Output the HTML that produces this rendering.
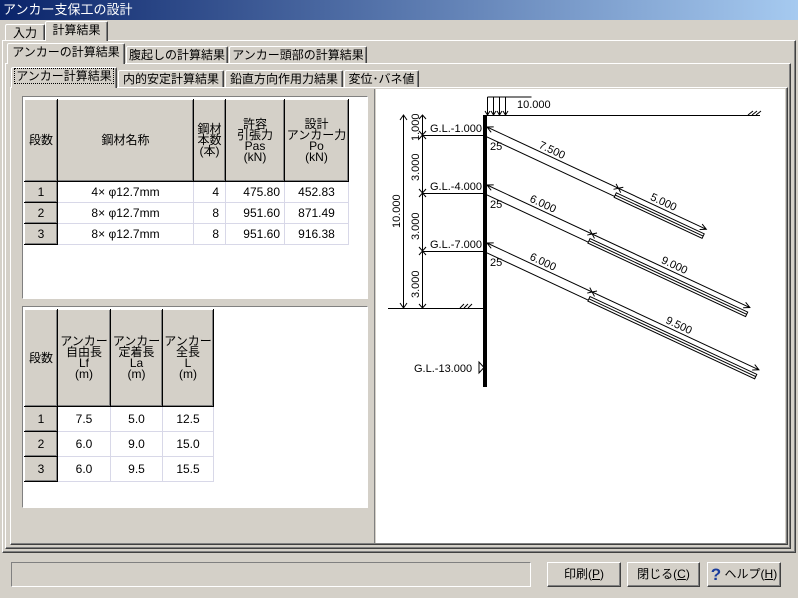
<!DOCTYPE html>
<html><head><meta charset="utf-8"><style>
*{margin:0;padding:0;box-sizing:border-box}
body{width:798px;height:598px;overflow:hidden;background:#d4d0c8;font-family:"Liberation Sans","Noto Sans CJK JP",sans-serif;font-size:12px;color:#000;position:relative}
.a{position:absolute}
.title{left:0;top:0;width:798px;height:20px;background:linear-gradient(90deg,#0a246a,#a6caf0);color:#fff;font-size:13px;line-height:20px;padding-left:3px}
.tab{position:absolute;border:1px solid #fff;border-right-color:#404040;border-bottom:none;border-radius:2px 2px 0 0;text-align:center;line-height:17px;font-size:12px;background:#d4d0c8;box-shadow:inset -1px 0 #808080;white-space:nowrap;overflow:visible}
.panel{position:absolute;border:1px solid #fff;border-right-color:#404040;border-bottom-color:#404040;box-shadow:inset -1px -1px #808080}
.sunk{position:absolute;border:1px solid #808080;border-right-color:#fff;border-bottom-color:#fff;background:#fff}
table{border-collapse:collapse;position:absolute;font-size:12px}
td{border:1px solid #d8d8e8;text-align:center;height:21px;padding:0}
td.h{background:#d4d0c8;border:1px solid #000;border-top-color:#fff;border-left-color:#fff;box-shadow:inset -1px -1px #808080;line-height:11px;font-size:12px}
td.r{background:#d4d0c8;border:1px solid #000;border-top-color:#fff;border-left-color:#fff;box-shadow:inset -1px -1px #808080}
.btn{position:absolute;top:562px;height:25px;border:1px solid #fff;border-right-color:#404040;border-bottom-color:#404040;box-shadow:inset -1px -1px #808080;text-align:center;line-height:23px;font-size:12px;white-space:nowrap}
svg text{font-family:"Liberation Sans",sans-serif;font-size:11px}
</style></head><body>
<div class="a title">アンカー支保工の設計</div>
<div class="tab" style="left:5px;top:24px;width:40px;height:17px">入力</div>
<div class="panel" style="left:2px;top:40px;width:794px;height:513px"></div>
<div class="tab" style="left:45px;top:21px;width:63px;height:20px;border-bottom:none">計算結果</div>
<div class="panel" style="left:5px;top:63px;width:786px;height:486px"></div>
<div class="tab" style="left:7px;top:43px;width:118px;height:21px">アンカーの計算結果</div>
<div class="tab" style="left:126px;top:46px;width:102px;height:17px">腹起しの計算結果</div>
<div class="tab" style="left:229px;top:46px;width:138px;height:17px">アンカー頭部の計算結果</div>
<div class="panel" style="left:10px;top:87px;width:778px;height:458px"></div>
<div class="tab" style="left:11px;top:67px;width:106px;height:21px"><span style="border:1px dotted #000;padding:0 1px">アンカー計算結果</span></div>
<div class="tab" style="left:118px;top:70px;width:106px;height:17px">内的安定計算結果</div>
<div class="tab" style="left:225px;top:70px;width:118px;height:17px">鉛直方向作用力結果</div>
<div class="tab" style="left:344px;top:70px;width:75px;height:17px">変位･バネ値</div>

<div class="a" style="left:374px;top:89px;width:1px;height:455px;background:#808080"></div>
<div class="a" style="left:376px;top:89px;width:409px;height:454px;background:#fff"></div>

<div class="sunk" style="left:22px;top:96px;width:346px;height:203px"></div>
<table style="left:24px;top:99px">
<tr style="height:82px"><td class="h" style="width:33px">段数</td><td class="h" style="width:136px">鋼材名称</td><td class="h" style="width:32px">鋼材<br>本数<br>(本)</td><td class="h" style="width:59px">許容<br>引張力<br>Pas<br>(kN)</td><td class="h" style="width:64px">設計<br>アンカー力<br>Po<br>(kN)</td></tr>
<tr><td class="r">1</td><td>4× φ12.7mm</td><td style="text-align:right;padding-right:6px">4</td><td style="text-align:right;padding-right:4px">475.80</td><td>452.83</td></tr>
<tr><td class="r">2</td><td>8× φ12.7mm</td><td style="text-align:right;padding-right:6px">8</td><td style="text-align:right;padding-right:4px">951.60</td><td>871.49</td></tr>
<tr><td class="r">3</td><td>8× φ12.7mm</td><td style="text-align:right;padding-right:6px">8</td><td style="text-align:right;padding-right:4px">951.60</td><td>916.38</td></tr>
</table>

<div class="sunk" style="left:22px;top:306px;width:346px;height:202px"></div>
<table style="left:24px;top:309px">
<tr style="height:97px"><td class="h" style="width:33px">段数</td><td class="h" style="width:53px">アンカー<br>自由長<br>Lf<br>(m)</td><td class="h" style="width:52px">アンカー<br>定着長<br>La<br>(m)</td><td class="h" style="width:51px">アンカー<br>全長<br>L<br>(m)</td></tr>
<tr style="height:25px"><td class="r">1</td><td>7.5</td><td>5.0</td><td>12.5</td></tr>
<tr style="height:25px"><td class="r">2</td><td>6.0</td><td>9.0</td><td>15.0</td></tr>
<tr style="height:25px"><td class="r">3</td><td>6.0</td><td>9.5</td><td>15.5</td></tr>
</table>

<svg class="a" style="left:0;top:0" width="798" height="598" viewBox="0 0 798 598" fill="none" stroke="#000" stroke-width="1">
<rect x="483" y="115" width="4" height="272" fill="#000" stroke="none"/>
<path d="M487 115.5H760M388 308.5H483"/>
<path d="M748 115l5-4M752 115l5-4M756 115l5-4M460 308l4-4M464 308l4-4M468 308l4-4"/>
<path d="M487.5 97v18M487.5 97h44M493.5 97v18M499.5 97v18M505.5 97v18M485 111l2.5 4 2.5-4M491 111l2.5 4 2.5-4M497 111l2.5 4 2.5-4M503 111l2.5 4 2.5-4"/>
<text x="517" y="108" fill="#000" stroke="none">10.000</text>
<path d="M403.5 115v193M400 120l3.5-5 3.5 5M400 303l3.5 5 3.5-5"/>
<path d="M422.5 115v193M419 119l3.5-4 3.5 4M419 131l3.5 4 3.5-4M419 139l3.5-4 3.5 4M419 189l3.5 4 3.5-4M419 197l3.5-4 3.5 4M419 247l3.5 4 3.5-4M419 255l3.5-4 3.5 4M419 304l3.5 4 3.5-4"/>
<path d="M422 135.5h61M422 193.5h61M422 251.5h61"/>
<g fill="#000" stroke="none">
<text x="430" y="132">G.L.-1.000</text><text x="430" y="190">G.L.-4.000</text><text x="430" y="248">G.L.-7.000</text>
<text x="414" y="372">G.L.-13.000</text>
<text transform="translate(400,228) rotate(-90)">10.000</text>
<text transform="translate(419,141) rotate(-90)">1.000</text>
<text transform="translate(419,181) rotate(-90)">3.000</text>
<text transform="translate(419,240) rotate(-90)">3.000</text>
<text transform="translate(419,298) rotate(-90)">3.000</text>
<text x="490" y="150">25</text><text x="490" y="208">25</text><text x="490" y="266">25</text>
</g>
<path d="M479 362v11l5-5.5z"/>
<g transform="translate(487,127) rotate(25)">
<path d="M0 0H242M0 9H145M145 5H242V10H145ZM145 7.5H242M6 -3L0 0 6 3M141 -3l4 3-4 3M149 -3l-4 3 4 3M236 -3l6 3-6 3"/>
<text x="55" y="-3" fill="#000" stroke="none">7.500</text><text x="178" y="-3" fill="#000" stroke="none">5.000</text>
</g>
<g transform="translate(487,185) rotate(25)">
<path d="M0 0H290M0 9H116M116 5H290V10H116ZM116 7.5H290M6 -3L0 0 6 3M112 -3l4 3-4 3M120 -3l-4 3 4 3M284 -3l6 3-6 3"/>
<text x="45" y="-3" fill="#000" stroke="none">6.000</text><text x="190" y="-3" fill="#000" stroke="none">9.000</text>
</g>
<g transform="translate(487,243) rotate(25)">
<path d="M0 0H300M0 9H116M116 5H300V10H116ZM116 7.5H300M6 -3L0 0 6 3M112 -3l4 3-4 3M120 -3l-4 3 4 3M294 -3l6 3-6 3"/>
<text x="45" y="-3" fill="#000" stroke="none">6.000</text><text x="195" y="-3" fill="#000" stroke="none">9.500</text>
</g>
</svg>

<div class="a" style="left:11px;top:562px;width:520px;height:25px;border:1px solid #808080;border-right-color:#fff;border-bottom-color:#fff"></div>
<div class="btn" style="left:547px;width:74px">印刷(<u>P</u>)</div>
<div class="btn" style="left:627px;width:73px">閉じる(<u>C</u>)</div>
<div class="btn" style="left:707px;width:74px"><span style="color:#1a3c9c;font-weight:bold;font-size:17px;vertical-align:-2px">?</span> ヘルプ(<u>H</u>)</div>
</body></html>
